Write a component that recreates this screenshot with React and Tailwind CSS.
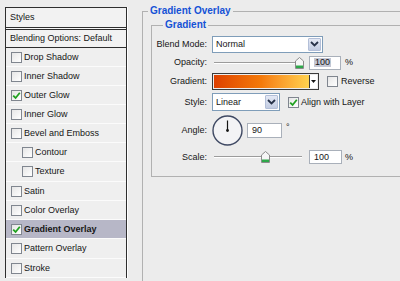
const layers = [
  { name: "Drop Shadow", h: "h-[19px]" },
  { name: "Inner Shadow", h: "h-[19px]" },
  { name: "Outer Glow", h: "h-[19px]", checked: true },
  { name: "Inner Glow", h: "h-[19px]" },
  { name: "Bevel and Emboss", h: "h-[19px]" },
  { name: "Contour", h: "h-[19px]", sub: true },
  { name: "Texture", h: "h-[20px]", sub: true },
  { name: "Satin", h: "h-[19px]" },
  { name: "Color Overlay", h: "h-[19px]" },
  { name: "Gradient Overlay", h: "h-[19px]", checked: true, active: true },
  { name: "Pattern Overlay", h: "h-[20px]" },
  { name: "Stroke", h: "h-[19px]" },
];

function Check({ checked }) {
  return (
    <div className="flex h-[11px] w-[11px] shrink-0 items-center justify-center border border-[#80868f] bg-gradient-to-br from-[#e6e6e6] to-white">
      {checked && (
        <svg width="9" height="9" viewBox="0 0 9 9">
          <path d="M1.2 4.6 L3.6 7 L7.8 1.8" fill="none" stroke="#21a121" strokeWidth="1.8" />
        </svg>
      )}
    </div>
  );
}

function Chevron() {
  return (
    <svg width="9" height="6" viewBox="0 0 9 6">
      <path d="M1 1 L4.5 4.5 L8 1" fill="none" stroke="#273249" strokeWidth="1.8" />
    </svg>
  );
}

function Select({ value, width }) {
  return (
    <div className={`flex h-[17px] ${width} items-stretch border border-[#7f9db9] bg-white`}>
      <div className="flex flex-1 items-center pl-[3px]">{value}</div>
      <div className="m-[1px] flex w-[13px] items-center justify-center rounded-[1px] border border-[#b3bfd8] bg-gradient-to-b from-[#e4e9f5] to-[#c2cce2]">
        <Chevron />
      </div>
    </div>
  );
}

function Slider({ pos }) {
  return (
    <div className="relative h-[12px] w-[94px]">
      <div className="absolute top-[5px] left-[2px] h-[2px] w-[88px] border-t border-[#9c9c9c] border-b border-b-white" />
      <svg className="absolute top-0" style={{ left: pos - 4 }} width="9" height="12" viewBox="0 0 9 12">
        <path d="M0.5 4 L4.5 0.5 L8.5 4 L8.5 11.5 L0.5 11.5 Z" fill="#f6f6f6" stroke="#8b8b8b" />
        <rect x="1" y="8.5" width="7" height="2.5" fill="#2ea84a" />
      </svg>
    </div>
  );
}

function Field({ children, width }) {
  return (
    <div className={`flex h-[14px] ${width} items-center border border-[#a9b0ba] bg-white pl-[4px]`}>
      {children}
    </div>
  );
}

function Row({ label, h, className = "", children }) {
  return (
    <div className={`flex items-center ${h} ${className}`}>
      <div className="w-[56px] shrink-0 pr-[1px] text-right">{label}</div>
      <div className="ml-[4px] flex items-center">{children}</div>
    </div>
  );
}

export default function App() {
  return (
    <div
      className="flex h-[281px] w-[400px] overflow-hidden bg-[#ececec] text-[9px] leading-none text-[#161616]"
      style={{ fontFamily: '"Liberation Sans", Arial, sans-serif' }}
    >
      <div className="w-[142px] shrink-0 pt-[7px] pl-[5px]">
        <div className="w-[122px] border-x border-t border-[#2e2e2e] bg-[#efefef] shadow-[1px_0_0_#fff]">
          <div className="flex h-[20px] items-center border-b border-[#2e2e2e] bg-[#f2f2f2] pl-[4px]">Styles</div>
          <div className="h-[1px] bg-[#f7f7f7]" />
          <div className="flex h-[19px] items-center border-y border-[#2e2e2e] bg-[#f2f2f2] pl-[4px]">
            Blending Options: Default
          </div>
          {layers.map((l) => (
            <div
              key={l.name}
              className={`flex ${l.h} items-center gap-[2px] border-b border-[#fbfbfb] ${l.sub ? "pl-[16px]" : "pl-[5px]"} ${l.active ? "bg-[#b7b7c7] font-bold" : ""}`}
            >
              <Check checked={l.checked} />
              <span>{l.name}</span>
            </div>
          ))}
        </div>
      </div>

      <fieldset className="mt-[5px] h-[300px] w-[300px] shrink-0 border border-[#b1b1b1] pl-[5px]">
        <legend className="px-[2px] text-[10px] leading-[12px] font-bold text-[#1552d6]">Gradient Overlay</legend>
        <fieldset className="mt-[2px] ml-[3px] w-[290px] border border-[#b1b1b1] pb-[10px]">
          <legend className="ml-[11px] px-[2px] text-[10px] leading-[12px] font-bold text-[#1552d6]">Gradient</legend>

          <Row label="Blend Mode:" h="h-[18px]" className="mt-[4px]">
            <Select value="Normal" width="w-[111px]" />
          </Row>

          <Row label="Opacity:" h="h-[19px]">
            <Slider pos={87} />
            <div className="ml-[3px]">
              <Field width="w-[32px]">
                <span className="bg-[#c4c7d4] px-[1px]">100</span>
              </Field>
            </div>
            <span className="ml-[4px]">%</span>
          </Row>

          <Row label="Gradient:" h="h-[18px]">
            <div className="flex h-[17px] w-[107px] border border-[#3a3a3a] p-[1px]">
              <div className="flex-1 bg-gradient-to-r from-[#de3f00] via-[#f47a0a] to-[#ffd24e]" />
              <div className="flex w-[8px] items-center justify-center border-l border-[#3a3a3a] bg-white">
                <svg width="5" height="3" viewBox="0 0 5 3">
                  <path d="M0 0 L5 0 L2.5 3 Z" fill="#111" />
                </svg>
              </div>
            </div>
            <div className="ml-[8px]">
              <Check />
            </div>
            <span className="ml-[3px]">Reverse</span>
          </Row>

          <Row label="Style:" h="h-[20px]" className="mt-[2px]">
            <div className="flex h-[18px] w-[68px] items-stretch border border-[#7f9db9] bg-white">
              <div className="flex flex-1 items-center pl-[3px]">Linear</div>
              <div className="m-[1px] flex w-[13px] items-center justify-center rounded-[1px] border border-[#b3bfd8] bg-gradient-to-b from-[#e4e9f5] to-[#c2cce2]">
                <Chevron />
              </div>
            </div>
            <div className="ml-[8px]">
              <Check checked />
            </div>
            <span className="ml-[2px]">Align with Layer</span>
          </Row>

          <Row label="Angle:" h="h-[32px]" className="mt-[2px]">
            <svg width="31" height="31" viewBox="0 0 31 31">
              <circle cx="15.5" cy="15.5" r="14.5" fill="#f3f3f5" stroke="#3f4963" strokeWidth="1.4" />
              <line x1="15.5" y1="15.5" x2="15.5" y2="5.5" stroke="#151515" strokeWidth="1.2" />
              <circle cx="15.5" cy="15.5" r="1.4" fill="#151515" />
            </svg>
            <div className="ml-[4px]">
              <div className="flex h-[15px] w-[35px] items-center border border-[#a9b0ba] bg-white pl-[4px]">90</div>
            </div>
            <span className="mb-[6px] ml-[4px]">°</span>
          </Row>

          <Row label="Scale:" h="h-[18px]" className="mt-[2px]">
            <Slider pos={53} />
            <div className="ml-[3px]">
              <Field width="w-[33px]">100</Field>
            </div>
            <span className="ml-[3px]">%</span>
          </Row>
        </fieldset>
      </fieldset>
    </div>
  );
}
